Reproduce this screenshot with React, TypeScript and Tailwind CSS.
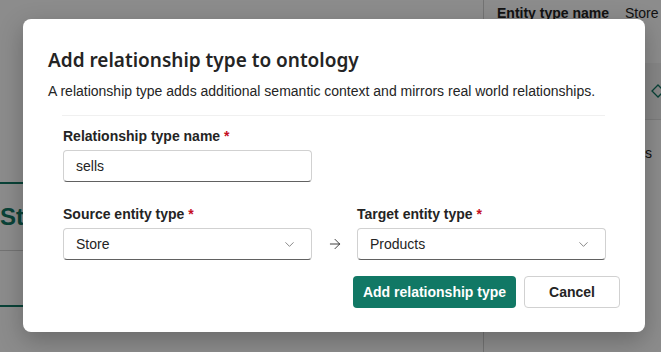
import React, { useState } from "react";
import { ChevronDown, ArrowRight } from "lucide-react";

const font = "font-['Segoe_UI','Liberation_Sans',Arial,sans-serif]";

function Label({ text }: { text: string }) {
  return (
    <div className="text-[14px] leading-5 font-semibold text-[#242424]">
      {text} <span className="text-[#c50f1f]">*</span>
    </div>
  );
}

function Dropdown({ value }: { value: string }) {
  return (
    <button className="flex items-center justify-between w-[249px] h-8 pl-3 pr-[14px] rounded border border-[#d1d1d1] border-b-[#616161] bg-white text-[14px] text-[#242424]">
      <span>{value}</span>
      <ChevronDown className="w-[15px] h-[15px] text-[#616161]" strokeWidth={1.2} />
    </button>
  );
}

function BackgroundPage() {
  return (
    <div className="flex w-full h-[352px] bg-white text-[#242424]">
      <div className="relative w-[483px] shrink-0 overflow-hidden">
        <div className="absolute left-[-180px] top-[182px] w-[203px] h-[125px] border-y-2 border-[#117865] bg-white">
          <div className="h-[66px] flex items-center pl-[180px] text-[24px] font-bold text-[#117865] whitespace-nowrap">
            Store
          </div>
          <div className="border-t border-[#d1d1d1]" />
        </div>
      </div>
      <div className="flex-1 border-l border-[#d1d1d1] flex flex-col min-w-0">
        <div className="flex items-center h-[26px] pl-[13px] gap-4 text-[14px] whitespace-nowrap">
          <span className="font-semibold">Entity type name</span>
          <span>Store</span>
        </div>
        <div className="h-[37px]" />
        <div className="h-[57px] bg-[#f5f5f5] border-b border-[#e0e0e0] flex items-center justify-end">
          <svg width="14" height="14" viewBox="0 0 14 14" className="mr-[-4px]">
            <path d="M7 1 L13 7 L7 13 L1 7 Z" fill="none" stroke="#117865" strokeWidth="1.3" />
          </svg>
        </div>
        <div className="h-[66px] flex items-center justify-end pr-[9px] text-[14px]">Properties</div>
      </div>
    </div>
  );
}

export default function App() {
  const [name, setName] = useState("sells");

  return (
    <div className={`relative w-full h-[352px] overflow-hidden ${font}`}>
      <BackgroundPage />
      <div className="absolute inset-0 bg-black/45" />
      <div className="absolute left-[23px] top-[19px] w-[622px] h-[313px] rounded-lg bg-white shadow-[0_8px_24px_rgba(0,0,0,0.25)] px-[25px] pt-[27px] pb-6 flex flex-col">
        <h2 className="text-[19px] leading-7 font-semibold text-[#242424] font-['Segoe_UI','Noto_Sans',sans-serif]">
          Add relationship type to ontology
        </h2>
        <p className="mt-[7px] text-[14px] leading-5 text-[#242424] whitespace-nowrap">
          A relationship type adds additional semantic context and mirrors real world relationships.
        </p>
        <div className="px-[14px] mt-[14px]">
          <div className="border-t border-[#f0f0f0] mr-[1px]" />
          <div className="pl-px pt-[10px]">
            <Label text="Relationship type name" />
            <input
              value={name}
              onChange={(e) => setName(e.target.value)}
              className="mt-1 w-[249px] h-8 px-3 rounded border border-[#d1d1d1] border-b-[#616161] text-[14px] text-[#242424] outline-none"
            />
            <div className="flex items-end mt-[22px]">
              <div className="flex flex-col gap-1">
                <Label text="Source entity type" />
                <Dropdown value="Store" />
              </div>
              <div className="w-[45px] h-8 flex items-center justify-center">
                <ArrowRight className="w-4 h-4 text-[#242424]" strokeWidth={1.3} />
              </div>
              <div className="flex flex-col gap-1">
                <Label text="Target entity type" />
                <Dropdown value="Products" />
              </div>
            </div>
          </div>
        </div>
        <div className="flex justify-end gap-2 mt-4">
          <button className="h-8 w-[163px] rounded bg-[#117865] text-white text-[14px] font-semibold">
            Add relationship type
          </button>
          <button className="h-8 w-[96px] rounded border border-[#d1d1d1] bg-white text-[#242424] text-[14px] font-semibold">
            Cancel
          </button>
        </div>
      </div>
    </div>
  );
}
